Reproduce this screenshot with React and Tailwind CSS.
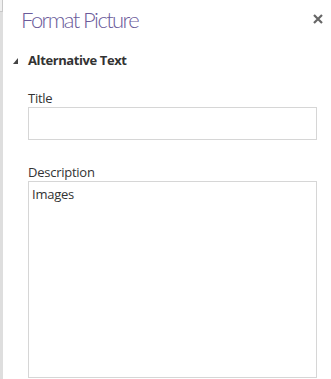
export default function App() {
  return (
    <div className="flex h-[379px] w-[331px] overflow-hidden bg-white font-['Open_Sans','Noto_Sans',sans-serif] text-[#333]">
      {/* left edge of the document area */}
      <div className="flex w-[3px] shrink-0 flex-col bg-[#dedede]">
        <div className="h-[12px] border-r border-b border-[#c8c8c8] bg-[#efefef]" />
      </div>

      <div className="flex min-w-0 flex-1 flex-col">
        <div className="flex items-start justify-between pl-[18px] pr-[8px] pt-[4px]">
          <h1 className="font-['Lato','Open_Sans',sans-serif] text-[22px] font-light leading-[32px] tracking-[-1.6px] text-[#6b5b9a]">
            Format Picture
          </h1>
          <svg className="mt-[10px]" width="10" height="10" viewBox="0 0 10 10">
            <path d="M1 1 L9 9 M9 1 L1 9" stroke="#666" strokeWidth="2.2" />
          </svg>
        </div>

        <div className="mt-[16px] flex items-center pl-[10px]">
          <svg width="5" height="6" viewBox="0 0 5 6" className="mr-[10px] mt-[1px]">
            <path d="M5 0 L5 6 L0 6 Z" fill="#444" />
          </svg>
          <span className="text-[13px] font-bold leading-[17px] tracking-[-0.4px] text-[#333]">Alternative Text</span>
        </div>

        <div className="mt-[21px] pl-[25px] pr-[14px] tracking-[-0.25px]">
          <label className="block text-[13px] leading-[17px]">Title</label>
          <input className="block h-[33px] w-[289px] border border-[#d6d6d6] px-[3px] text-[13px] outline-none" />

          <label className="mt-[24px] block text-[13px] leading-[17px]">Description</label>
          <textarea
            defaultValue="Images"
            className="block h-[197px] w-[289px] resize-none border border-[#d6d6d6] px-[3px] py-[4px] text-[13px] leading-[17px] tracking-[-0.25px] outline-none"
          />
        </div>
      </div>
    </div>
  );
}
